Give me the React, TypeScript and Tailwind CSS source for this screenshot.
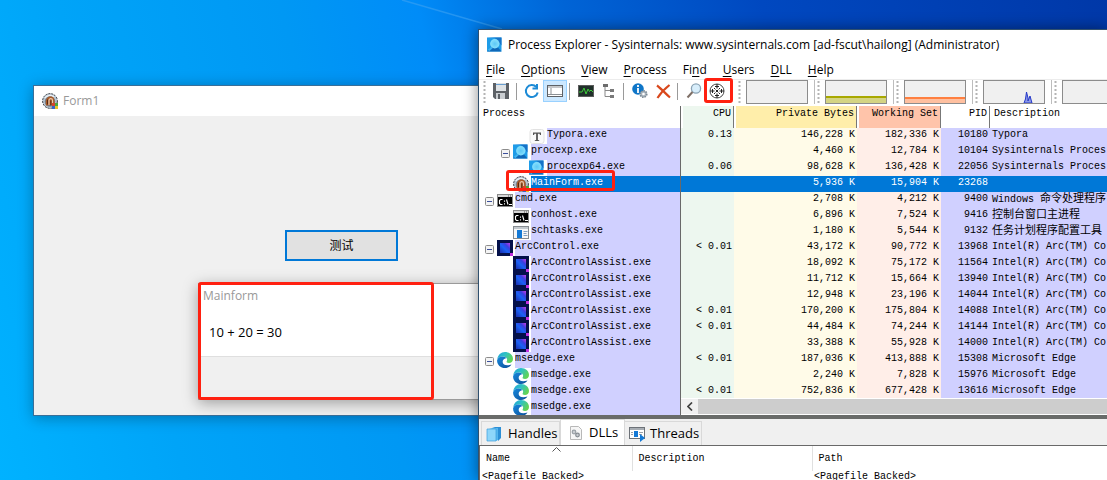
import React from 'react'
import clsx from 'clsx'

type IconName = 'typora' | 'procexp' | 'form' | 'console' | 'app' | 'arc' | 'edge'

interface Proc {
  name: string
  icon: IconName
  level: 1 | 2 | 3
  open?: boolean
  selected?: boolean
  cpu?: string
  priv?: string
  ws?: string
  pid?: string
  desc?: string
  descZh?: string
}

const arcDesc = 'Intel(R) Arc(TM) Co'

const procs: Proc[] = [
  { name: 'Typora.exe', icon: 'typora', level: 3, cpu: '0.13', priv: '146,228 K', ws: '182,336 K', pid: '10180', desc: 'Typora' },
  { name: 'procexp.exe', icon: 'procexp', level: 2, open: true, priv: '4,460 K', ws: '12,784 K', pid: '10104', desc: 'Sysinternals Proces' },
  { name: 'procexp64.exe', icon: 'procexp', level: 3, cpu: '0.06', priv: '98,628 K', ws: '136,428 K', pid: '22056', desc: 'Sysinternals Proces' },
  { name: 'MainForm.exe', icon: 'form', level: 2, selected: true, priv: '5,936 K', ws: '15,904 K', pid: '23268' },
  { name: 'cmd.exe', icon: 'console', level: 1, open: true, priv: '2,708 K', ws: '4,212 K', pid: '9400', desc: 'Windows ', descZh: '命令处理程序' },
  { name: 'conhost.exe', icon: 'console', level: 2, priv: '6,896 K', ws: '7,524 K', pid: '9416', descZh: '控制台窗口主进程' },
  { name: 'schtasks.exe', icon: 'app', level: 2, priv: '1,180 K', ws: '5,544 K', pid: '9132', descZh: '任务计划程序配置工具' },
  { name: 'ArcControl.exe', icon: 'arc', level: 1, open: true, cpu: '< 0.01', priv: '43,172 K', ws: '90,772 K', pid: '13968', desc: arcDesc },
  { name: 'ArcControlAssist.exe', icon: 'arc', level: 2, priv: '18,092 K', ws: '75,172 K', pid: '11564', desc: arcDesc },
  { name: 'ArcControlAssist.exe', icon: 'arc', level: 2, priv: '11,712 K', ws: '15,664 K', pid: '13940', desc: arcDesc },
  { name: 'ArcControlAssist.exe', icon: 'arc', level: 2, priv: '12,948 K', ws: '23,196 K', pid: '14044', desc: arcDesc },
  { name: 'ArcControlAssist.exe', icon: 'arc', level: 2, cpu: '< 0.01', priv: '170,200 K', ws: '175,804 K', pid: '14088', desc: arcDesc },
  { name: 'ArcControlAssist.exe', icon: 'arc', level: 2, cpu: '< 0.01', priv: '44,484 K', ws: '74,244 K', pid: '14144', desc: arcDesc },
  { name: 'ArcControlAssist.exe', icon: 'arc', level: 2, priv: '33,388 K', ws: '55,928 K', pid: '14000', desc: arcDesc },
  { name: 'msedge.exe', icon: 'edge', level: 1, open: true, cpu: '< 0.01', priv: '187,036 K', ws: '413,888 K', pid: '15308', desc: 'Microsoft Edge' },
  { name: 'msedge.exe', icon: 'edge', level: 2, priv: '2,240 K', ws: '7,828 K', pid: '15976', desc: 'Microsoft Edge' },
  { name: 'msedge.exe', icon: 'edge', level: 2, cpu: '< 0.01', priv: '752,836 K', ws: '677,428 K', pid: '13616', desc: 'Microsoft Edge' },
]

const menus = ['File', 'Options', 'View', 'Process', 'Find', 'Users', 'DLL', 'Help']
// index of the underlined access key in each menu
const accessKeys = [0, 0, 0, 0, 2, 0, 0, 0]

const indents = { 1: 'pl-[18px]', 2: 'pl-[34px]', 3: 'pl-[50px]' }
const openIndents = { 1: 'pl-[6px]', 2: 'pl-[22px]', 3: 'pl-[38px]' }

const ProcexpIcon: React.FC = () => (
  <svg width="16" height="16" viewBox="0 0 16 16" className="shrink-0">
    <defs>
      <radialGradient id="lens">
        <stop offset="0" stopColor="#5cc8f6" />
        <stop offset="1" stopColor="#86e0fc" />
      </radialGradient>
    </defs>
    <rect y="0.500" width="14.500" height="14" fill="#1e9ce8" />
    <path d="M0 .5h14.500v8L8 1z" fill="#1573c8" />
    <path d="M0 14.500l4-4h7l3.500 4z" fill="#0f68b8" />
    <path d="M5 10.500L1.500 13.500" stroke="#3fb4f0" strokeWidth="2" />
    <circle cx="7.800" cy="6.800" r="4.700" fill="url(#lens)" />
  </svg>
)

const FormIcon: React.FC = () => (
  <svg width="16" height="16" viewBox="0 0 16 16" className="shrink-0">
    <circle cx="8" cy="8" r="7.400" fill="#b9c6d2" stroke="#3a3f45" strokeWidth="1" strokeDasharray="2 1" />
    <path d="M3 5a6 6 0 0 1 9-1" fill="none" stroke="#eef3f7" strokeWidth="1.500" />
    <circle cx="8" cy="8.500" r="5.300" fill="#76889a" />
    <path d="M4 12.500C3 6 5 3.500 8.500 3.500S13 6 12.500 12z" fill="#a85a28" />
    <path d="M7 12V7.500c0-2.500 3.500-2.500 3.500 0V11" fill="none" stroke="#e9c9ae" strokeWidth="1.200" />
    <path d="M8.800 7.500v5M5.500 6.500v5" stroke="#5a2a12" strokeWidth="1" />
    <rect x="10" y="10" width="3" height="3" fill="#d8432e" />
    <rect x="13" y="10" width="3" height="3" fill="#4aa83c" />
    <rect x="10" y="13" width="3" height="3" fill="#3665c8" />
    <rect x="13" y="13" width="3" height="3" fill="#e9c22c" />
  </svg>
)

const ProcIcon: React.FC<{ name: IconName }> = ({ name }) => {
  if (name === 'procexp') return <ProcexpIcon />
  if (name === 'form') return <FormIcon />
  return (
    <svg width="16" height="16" viewBox="0 0 16 16" className="shrink-0">
      {name === 'typora' && (
        <>
          <rect x="1" y="1.500" width="14" height="14" rx="2.500" fill="#fafafa" stroke="#e2e2e2" />
          <path d="M4 4.500h8v2.500h-1l-.5-1.300H8.900v6.300l1.300.3v.7H5.800v-.7l1.300-.3V5.700H5.500L5 7H4z" fill="#555" />
        </>
      )}
      {name === 'console' && (
        <>
          <rect x="0.500" y="2.500" width="15" height="12" fill="#000" stroke="#8a8a8a" />
          <rect x="1" y="3" width="14" height="2" fill="#d6d6d6" />
          <path d="M11 4h1M13 4h1" stroke="#555" />
          <path d="M5.500 7.500H3.500L2.500 8.500v3l1 1h2M7.500 8.500v1.200M7.500 11.300v1.200M9.500 7.500l1.500 5M12 12.500h3" fill="none" stroke="#fff" strokeWidth="1.100" />
        </>
      )}
      {name === 'app' && (
        <>
          <rect x="0.500" y="2.500" width="15" height="12" fill="#f7f7f7" stroke="#868b90" />
          <rect x="1" y="3" width="14" height="2" fill="#c3c9ce" />
          <rect x="4" y="6" width="5" height="8" fill="#1379d6" />
          <path d="M10.500 7.500h4M10.500 9.500h3M10.500 11.500h4" stroke="#7f9fc0" />
        </>
      )}
      {name === 'arc' && (
        <>
          <defs>
            <linearGradient id="arcFill" x1="0" y1="1" x2="1" y2="0">
              <stop offset="0" stopColor="#1a2cb0" />
              <stop offset="0.450" stopColor="#1a62f4" />
              <stop offset="0.700" stopColor="#3a40e0" />
              <stop offset="1" stopColor="#c83ae8" />
            </linearGradient>
          </defs>
          <rect width="16" height="16" fill="#04104a" />
          <rect x="3" y="3" width="10" height="10" fill="url(#arcFill)" />
          <rect x="13" y="13" width="3" height="3" fill="#c12fe0" />
        </>
      )}
      {name === 'edge' && (
        <>
          <defs>
            <linearGradient id="edgeTop" x1="0" y1="0" x2="1" y2="0.500">
              <stop offset="0" stopColor="#1fa0dc" />
              <stop offset="0.500" stopColor="#2fc2c4" />
              <stop offset="1" stopColor="#62d455" />
            </linearGradient>
            <linearGradient id="edgeLow" x1="0" y1="0" x2="1" y2="1">
              <stop offset="0" stopColor="#1788dc" />
              <stop offset="1" stopColor="#0c4f98" />
            </linearGradient>
          </defs>
          <path d="M0.200 7.500C.7 3 4 0 8 0c4.600 0 8 3.200 8 6.900 0 2.500-1.800 4-4 4-1.700 0-2.700-.6-2.700-1.200 0-.5.800-.9.800-2.100C10.100 5.800 8 4.600 5.700 4.600 3 4.600 1 5.800.2 7.500z" fill="url(#edgeTop)" />
          <path d="M0.100 8.200C.6 6 2.800 4.500 5.600 4.600 7.600 4.700 9 5.500 9.700 6.500 7 6.200 5.400 8 5.700 10.200c.4 2.400 3.200 4 8.800 2.300C13 14.800 10.700 16 8 16 3.400 16-.2 12.500.1 8.200z" fill="url(#edgeLow)" />
          <path d="M9.700 6.500C7.800 6.300 6.300 7.800 6.500 9.500c.2 2 2.300 3.300 4.800 2.700-1.300-.4-2-1.300-2-2 0-.9.900-1.300.8-2.600z" fill="#fff" />
        </>
      )}
    </svg>
  )
}

const Toggle: React.FC = () => (
  <svg width="9" height="9" viewBox="0 0 9 9" className="mr-[3px] mt-[5px] shrink-0">
    <rect x="0.500" y="0.500" width="8" height="8" rx="1" fill="#f4f4f4" stroke="#8c8c8c" />
    <path d="M2 4.500h5" stroke="#3b4f9c" />
  </svg>
)

const Sep: React.FC<{ className?: string }> = ({ className }) => (
  <span className={clsx('mt-[3px] h-[17px] w-px shrink-0 bg-[#9a9a9a]', className)} />
)

const Grip: React.FC = () => (
  <svg width="3" height="23" viewBox="0 0 3 23" className="shrink-0">
    <path d="M1.500 1v22" stroke="#b4b4b4" strokeWidth="2" strokeDasharray="2 2" />
  </svg>
)

const ToolButton: React.FC<{ label: string; className?: string; children: React.ReactNode }> = ({ label, className, children }) => (
  <button type="button" aria-label={label} className={clsx('flex h-[22px] shrink-0 items-center justify-center', className)}>
    {children}
  </button>
)

const MiniGraph: React.FC<{ children?: React.ReactNode }> = ({ children }) => (
  <div className="flex shrink-0 items-start">
    <Grip />
    <svg width="62" height="25" viewBox="0 0 62 25" className="ml-[5px] mr-[6px]">
      <rect width="62" height="24" fill="#f0f0f0" />
      {children}
      <rect x="0.500" y="0.500" width="61" height="23" fill="none" stroke="#8c8c8c" />
    </svg>
    <span className="mr-[2px] h-6 w-px bg-[#bdbdbd]" />
  </div>
)

const Toolbar: React.FC = () => (
  <div className="flex h-[27px] shrink-0 items-start overflow-hidden border-t border-[#ececec] pl-[4px]">
    <Grip />
    <ToolButton label="Save" className="ml-[6px] w-[18px]">
      <svg width="16" height="16" viewBox="0 0 16 16">
        <path d="M0 0h16v16H2l-2-2z" fill="#5d6166" />
        <rect x="3" y="0" width="10" height="8" fill="#dfe3e6" />
        <path d="M3 1.500h10" stroke="#6a9fd0" />
        <rect x="3" y="10" width="9" height="6" fill="#c9cdd1" />
        <rect x="5" y="11" width="2" height="5" fill="#5d6166" />
      </svg>
    </ToolButton>
    <Sep className="ml-[6px]" />
    <ToolButton label="Refresh Now" className="ml-[6px] w-[18px]">
      <svg width="16" height="16" viewBox="0 0 16 16">
        <path d="M13.700 9.500A6 6 0 1 1 12.300 4" fill="none" stroke="#1c8ad6" strokeWidth="2" />
        <path d="M13 1v4.500H8.500" fill="none" stroke="#1c8ad6" strokeWidth="2" />
      </svg>
    </ToolButton>
    <ToolButton label="Show Lower Pane" className="ml-[2px] w-[24px] border border-[#99d1ff] bg-[#cce8ff]">
      <svg width="16" height="12" viewBox="0 0 16 12">
        <rect x="0.500" y="0.500" width="15" height="11" fill="#fff" stroke="#5d6166" />
        <path d="M1 2h14M4 3v6M1 9.500h14" stroke="#8b9095" />
      </svg>
    </ToolButton>
    <Sep className="ml-[2px]" />
    <ToolButton label="System Information" className="ml-[7px] w-[18px]">
      <svg width="16" height="12" viewBox="0 0 16 12">
        <rect x="0.500" y="0.500" width="15" height="11" fill="#20302a" stroke="#5b5b5b" />
        <path d="M1 7h3l2-4 2 6 2-5 1.500 2.500L13 5l2 2" fill="none" stroke="#3ecb3a" />
      </svg>
    </ToolButton>
    <ToolButton label="Show Process Tree" className="ml-[5px] w-[18px]">
      <svg width="14" height="16" viewBox="0 0 14 16">
        <path d="M3 4v9.500h5M3 7.500h5" fill="none" stroke="#888" />
        <rect x="1" y="1" width="5" height="3" fill="#6c6c6c" />
        <rect x="8" y="6" width="4" height="3" fill="#7a7a7a" />
        <rect x="8" y="12" width="4" height="3" fill="#7a7a7a" />
      </svg>
    </ToolButton>
    <Sep className="ml-[5px]" />
    <ToolButton label="Properties" className="ml-[7px] w-[18px]">
      <svg width="16" height="16" viewBox="0 0 16 16">
        <circle cx="6" cy="6" r="5.800" fill="#0f76c8" />
        <path d="M6 2v2M6 5v5" stroke="#fff" strokeWidth="1.800" />
        <circle cx="11.500" cy="11" r="3.300" fill="#a9b4bd" stroke="#7d8a95" strokeWidth="1.600" strokeDasharray="1.500 1" />
        <circle cx="11.500" cy="11" r="1.300" fill="#fff" />
      </svg>
    </ToolButton>
    <ToolButton label="Kill Process" className="ml-[5px] w-[18px]">
      <svg width="15" height="15" viewBox="0 0 15 15">
        <path d="M1 1.500C5 4.500 10 10 14 13.500M13.500 1C9 4.500 4 10 1.500 14" fill="none" stroke="#d9481c" strokeWidth="2.200" />
      </svg>
    </ToolButton>
    <Sep className="ml-[5px]" />
    <ToolButton label="Find Handle or DLL" className="ml-[7px] w-[18px]">
      <svg width="16" height="16" viewBox="0 0 16 16">
        <circle cx="10" cy="5.500" r="4.600" fill="#d8eefb" stroke="#8aa3b5" strokeWidth="1.300" />
        <path d="M6.500 9L1.500 14.500" stroke="#7e6f66" strokeWidth="2" />
      </svg>
    </ToolButton>
    <ToolButton label="Find Window's Process" className="ml-[5px] w-[18px]">
      <svg width="16" height="16" viewBox="0 0 16 16">
        <circle cx="8" cy="8" r="7" fill="#fff" stroke="#444" strokeWidth="1" />
        <path d="M8 1v4.500M8 10.500V15M1 8h4.500M10.500 8H15" stroke="#222" strokeWidth="1.100" />
        <path d="M6 3.500h4M6 12.500h4M3.500 6v4M12.500 6v4M5 5l1.500 1.500M11 5L9.500 6.500M5 11l1.500-1.500M11 11L9.500 9.500" stroke="#222" />
        <rect x="7" y="7" width="2" height="2" fill="#222" />
      </svg>
    </ToolButton>
    <div className="ml-[12px] flex">
      <MiniGraph />
      <MiniGraph>
        <rect x="1" y="18" width="60" height="6" fill="#d4d484" />
        <rect x="1" y="16" width="60" height="2" fill="#a8a800" />
      </MiniGraph>
      <MiniGraph>
        <rect x="1" y="19" width="60" height="5" fill="#ffc0a0" />
        <rect x="1" y="17" width="60" height="2" fill="#ff8040" />
      </MiniGraph>
      <MiniGraph>
        <path d="M41 23l1.500-4 1-7 1.500 6v3l2-5 2 7z" fill="#8c98e8" stroke="#2438c8" />
      </MiniGraph>
      <MiniGraph />
    </div>
  </div>
)

const ProcessTree: React.FC = () => (
  <table className="w-full table-fixed border-collapse">
    <thead>
      <tr>
        <th className="h-[22px] p-0 pl-[4px] text-left align-top font-normal leading-4">Process</th>
      </tr>
    </thead>
    <tbody>
      {[...procs, { name: 'msedge.exe', icon: 'edge', level: 2 } as Proc].map((p, i) => (
        <tr key={i}>
          <td className="p-0">
            <div className={clsx('flex h-4', p.open ? openIndents[p.level] : indents[p.level])}>
              {p.open && <Toggle />}
              <ProcIcon name={p.icon} />
              <span className={clsx('ml-[2px] h-4 flex-1 leading-[14px]', p.selected ? 'bg-[#0078d7] text-white' : 'bg-[#d0d0ff]')}>{p.name}</span>
            </div>
          </td>
        </tr>
      ))}
    </tbody>
  </table>
)

const headCell = 'h-[22px] border-l-2 border-r border-l-transparent border-r-[#777] bg-clip-padding p-0 pr-[2px] text-right align-top font-normal leading-4'
const numCell = 'h-4 p-0 pr-[2px] text-right align-top leading-[14px]'

const ProcessColumns: React.FC = () => (
  <table className="w-full table-fixed border-separate border-spacing-0 whitespace-pre">
    <colgroup>
      <col className="w-[53px]" />
      <col className="w-[123px]" />
      <col className="w-[84px]" />
      <col className="w-[49px]" />
      <col />
    </colgroup>
    <thead>
      <tr>
        <th className={clsx(headCell, 'bg-[#edf7ef]')}>CPU</th>
        <th className={clsx(headCell, 'bg-[#ffeeaa]')}>Private Bytes</th>
        <th className={clsx(headCell, 'bg-[#ffc4aa]')}>Working Set</th>
        <th className={headCell}>PID</th>
        <th className="p-0 pl-[4px] text-left align-top font-normal leading-4">Description</th>
      </tr>
    </thead>
    <tbody>
      {procs.map((p) => (
        <tr key={p.pid} className={p.selected ? 'bg-[#0078d7] text-white' : undefined}>
          <td className={clsx(numCell, !p.selected && 'bg-[#edf7ef]')}>{p.cpu}</td>
          <td className={clsx(numCell, !p.selected && 'bg-[#fffbe8]')}>{p.priv}</td>
          <td className={clsx(numCell, !p.selected && 'bg-[#ffeee8]')}>{p.ws}</td>
          <td className={clsx(numCell, !p.selected && 'bg-[#d0d0ff]')}>{p.pid}</td>
          <td className={clsx('h-4 p-0 pl-[2px] align-top leading-[14px]', !p.selected && 'bg-[#d0d0ff]')}>
            {p.desc}
            {p.descZh && <span className="text-[11px] leading-[14px]">{p.descZh}</span>}
          </td>
        </tr>
      ))}
    </tbody>
  </table>
)

const LowerPane: React.FC = () => (
  <div className="min-h-0 flex-1 bg-[#f0f0f0]">
    <div className="flex h-[26px] items-end pl-[2px] text-[13px]">
      <button type="button" className="flex h-6 w-[79px] items-center gap-[6px] border border-b-0 border-[#d9d9d9] pl-[4px]">
        <svg width="16" height="16" viewBox="0 0 16 16" className="shrink-0">
          <path d="M6 1h9v11l-3 3V3z" fill="#2c8fd6" />
          <path d="M3 2h9v12l-2 1V4z" fill="#55b6ee" />
          <path d="M1 3h9v12H1z" fill="#8ed6fa" stroke="#3a9fdc" strokeWidth="0.700" />
        </svg>
        Handles
      </button>
      <button type="button" className="flex h-[26px] w-[65px] items-center gap-[6px] border border-b-0 border-[#d9d9d9] bg-white pl-[8px]">
        <svg width="14" height="16" viewBox="0 0 14 16" className="shrink-0">
          <path d="M1.500 1.500h8l3 3v10h-11z" fill="#f6f6f6" stroke="#b8b8b8" />
          <circle cx="5" cy="7" r="1.800" fill="#c8ccd0" stroke="#9aa0a6" strokeWidth="1.200" />
          <circle cx="8.500" cy="10" r="1.800" fill="#c8ccd0" stroke="#858b91" strokeWidth="1.200" />
        </svg>
        DLLs
      </button>
      <button type="button" className="flex h-6 w-[77px] items-center gap-[4px] border border-b-0 border-l-0 border-[#d9d9d9] pl-[4px]">
        <svg width="17" height="16" viewBox="0 0 17 16" className="shrink-0">
          <rect x="0.500" y="1.500" width="15" height="11" fill="#fff" stroke="#6d7278" />
          <path d="M1 3h14" stroke="#a7adb3" strokeWidth="2" />
          <rect x="5" y="5" width="4" height="6" fill="#1379d6" />
          <path d="M2 6.500h2M2 8.500h2M10 6.500h4M10 8.500h3" stroke="#9aa0a6" />
          <path d="M11 8v8l5-4z" fill="#1379d6" />
        </svg>
        Threads
      </button>
    </div>
    <div className="border-l border-t border-[#696969] bg-white font-['Liberation_Mono',monospace] text-[10px]">
      <table className="w-full table-fixed border-collapse whitespace-pre">
        <colgroup>
          <col className="w-[152px]" />
          <col className="w-[180px]" />
          <col />
        </colgroup>
        <thead>
          <tr>
            <th className="relative h-[25px] border-r border-[#e0e0e0] p-0 pl-[6px] text-left font-normal">
              Name
              <svg width="9" height="5" viewBox="0 0 9 5" className="absolute left-[72px] top-px">
                <path d="M0.500 4.500l4-4 4 4" fill="none" stroke="#555" />
              </svg>
            </th>
            <th className="h-[25px] border-r border-[#e0e0e0] p-0 pl-[6px] text-left font-normal">Description</th>
            <th className="h-[25px] p-0 pl-[6px] text-left font-normal">Path</th>
          </tr>
        </thead>
        <tbody>
          <tr>
            <td className="p-0 pl-[2px] leading-3">{'<Pagefile Backed>'}</td>
            <td className="p-0" />
            <td className="p-0 pl-[2px] leading-3">{'<Pagefile Backed>'}</td>
          </tr>
        </tbody>
      </table>
    </div>
  </div>
)

const ProcessExplorer: React.FC = () => (
  <section className="absolute bottom-0 left-[478px] right-0 top-[29px] flex flex-col overflow-hidden border-l border-t border-[#30506e] bg-white shadow-[0_0_14px_rgba(0,0,0,0.45)]">
    <header className="flex h-[30px] shrink-0 items-center gap-[5px] pl-[8px] text-[12px]">
      <ProcexpIcon />
      <h1 className="whitespace-nowrap">Process Explorer - Sysinternals: www.sysinternals.com [ad-fscut\hailong] (Administrator)</h1>
    </header>
    <nav className="flex h-[19px] shrink-0 items-center gap-4 pl-[7px] pt-px text-[12px]">
      {menus.map((m, i) => (
        <button key={m} type="button">
          {m.slice(0, accessKeys[i])}
          <span className="underline underline-offset-2">{m[accessKeys[i]]}</span>
          {m.slice(accessKeys[i] + 1)}
        </button>
      ))}
    </nav>
    <Toolbar />
    <div className="flex h-[309px] shrink-0 overflow-hidden font-['Liberation_Mono','Noto_Sans_CJK_SC',monospace] text-[10px]">
      <div className="w-[202px] shrink-0 border-r border-[#696969]">
        <ProcessTree />
      </div>
      <div className="flex min-w-0 flex-1 flex-col">
        <div className="min-h-0 flex-1 overflow-hidden">
          <ProcessColumns />
        </div>
        <div className="flex h-[17px] shrink-0 border-y border-white bg-[#f0f0f0]">
          <button type="button" aria-label="Scroll left" className="flex w-[17px] items-center justify-center">
            <svg width="6" height="9" viewBox="0 0 6 9">
              <path d="M5 0.500l-4 4 4 4" fill="none" stroke="#404040" strokeWidth="1.700" />
            </svg>
          </button>
          <div className="flex-1 bg-[#cdcdcd]" />
        </div>
      </div>
    </div>
    <div className="h-1 shrink-0 bg-[#696b69]" />
    <LowerPane />
  </section>
)

const App: React.FC = () => {
  return (
    <main className="relative h-screen min-h-[480px] w-full overflow-hidden bg-[linear-gradient(75deg,#00b2ff_0%,#00a4f8_15%,#0098f4_33%,#008cf8_44%,#007ae8_49%,#0064d6_56%,#0048c0_72%,#0038a8_100%)] font-['Open_Sans','Noto_Sans_CJK_SC',sans-serif] text-black">
      <svg className="absolute left-[380px] top-0" width="160" height="32" viewBox="0 0 160 32">
        <path d="M22 0L122 29" stroke="#3da2f2" strokeWidth="1.500" opacity="0.600" />
      </svg>

      <section className="absolute left-[33px] top-[85px] h-[331px] w-[560px] border border-[#3a6f98] bg-[#f0f0f0] shadow-[0_2px_14px_rgba(0,0,0,0.3)]">
        <header className="flex h-[30px] items-center gap-[5px] bg-white pl-[8px] text-[12px] text-[#999]">
          <FormIcon />
          <h2>Form1</h2>
        </header>
        <div className="pl-[251px] pt-[114px]">
          <button type="button" className="h-[31px] w-[113px] border-2 border-[#0078d7] bg-[#e1e1e1] text-[12px]">
            测试
          </button>
        </div>
      </section>

      <section className="absolute left-[198px] top-[283px] h-[117px] w-[320px] border border-[#9a9a9a] bg-[#f0f0f0] shadow-[0_3px_14px_rgba(0,0,0,0.35)]">
        <div className="h-[73px] border-b border-[#dfdfdf] bg-white">
          <h2 className="pl-[4px] pt-[4px] text-[12px] leading-4 text-[#999]">Mainform</h2>
          <p className="pl-[10px] pt-5 text-[13px] leading-4">10 + 20 = 30</p>
        </div>
      </section>

      <ProcessExplorer />

      {/* highlight boxes */}
      <div className="absolute left-[198px] top-[282px] h-[118px] w-[236px] rounded-[3px] border-[3px] border-[#ff2010]" />
      <div className="absolute left-[704px] top-[78px] h-[25px] w-[29px] rounded-[3px] border-[3px] border-[#ff2010]" />
      <div className="absolute left-[506px] top-[170px] h-[21px] w-[109px] rounded-[3px] border-[3px] border-[#ff2010]" />
    </main>
  )
}

export default App
